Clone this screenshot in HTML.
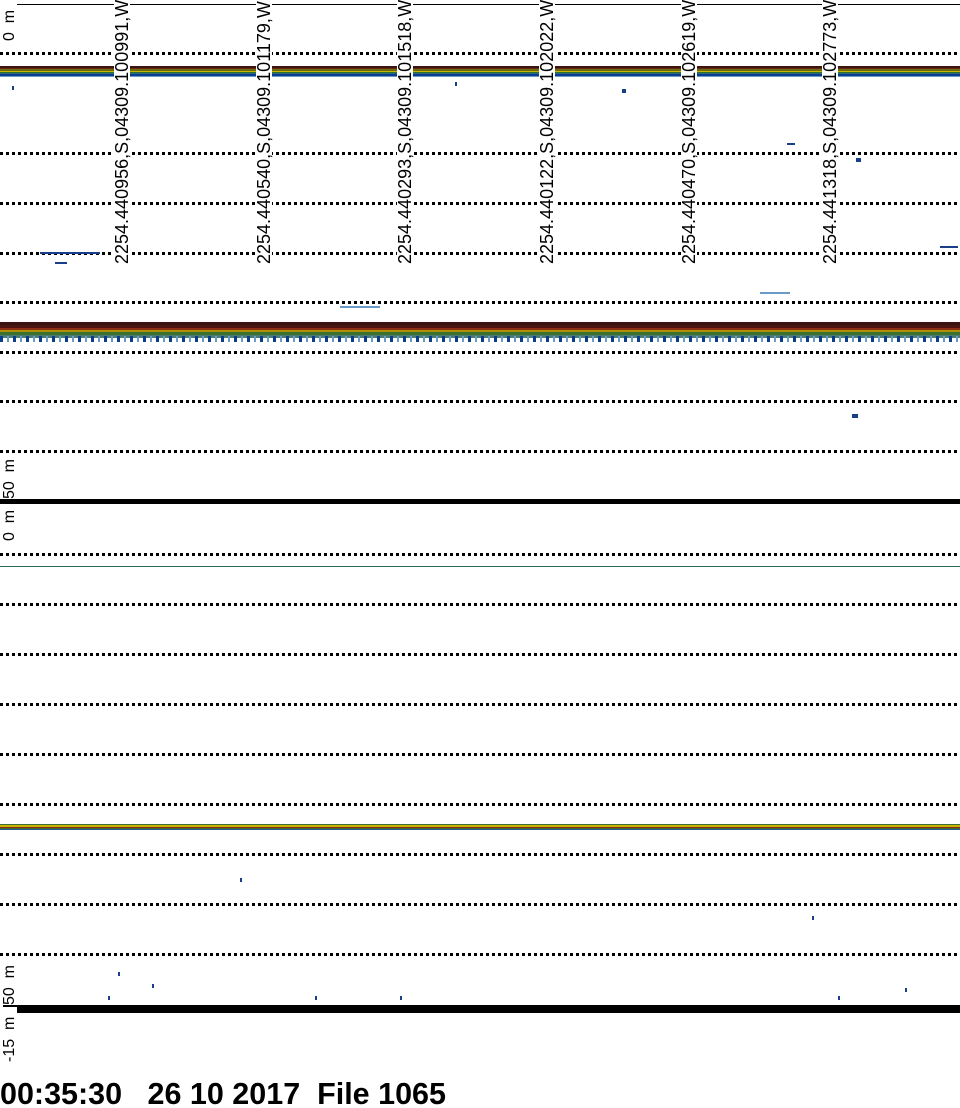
<!DOCTYPE html>
<html><head><meta charset="utf-8"><style>
html,body{margin:0;padding:0;background:#fff;width:960px;height:1108px;overflow:hidden;position:relative;font-family:"Liberation Sans",sans-serif}
.a{position:absolute}
.dot{position:absolute;left:0;width:960px;height:3px;background:repeating-linear-gradient(90deg,#000 0 3px,transparent 3px 6px)}
.vt{position:absolute;width:266px;height:16px;line-height:16px;font-size:18px;transform-origin:0 0;transform:rotate(-90deg);background:#fff;white-space:nowrap;color:#000}
.ax{position:absolute;font-size:16px;line-height:15px;transform-origin:0 0;transform:rotate(-90deg);white-space:nowrap}
.s{position:absolute;width:2px;height:4px;background:#1a3f8a}
</style></head><body>
<div class="a" style="left:17px;top:4px;width:943px;height:1px;background:#000"></div>
<div class="dot" style="top:52px"></div>
<div class="dot" style="top:152px"></div>
<div class="dot" style="top:202px"></div>
<div class="dot" style="top:252px"></div>
<div class="dot" style="top:301px"></div>
<div class="dot" style="top:351px"></div>
<div class="dot" style="top:400px"></div>
<div class="dot" style="top:450px"></div>
<div class="a" style="left:0;top:66px;width:960px;height:11px;background:linear-gradient(#3a1410 0 2px,#6b2a12 2px 3px,#6a6a10 3px 5px,#c8b400 5px 6px,#2f7030 6px 7px,#2a6a80 7px 8px,#0a3d8f 8px 10px,#6a9ac8 10px 11px)"></div>
<div class="a" style="left:0;top:322px;width:960px;height:16px;background:linear-gradient(#3a1410 0 3px,#4a1410 3px 6px,#8a3010 6px 8px,#b09000 8px 10px,#3a7030 10px 13px,#4a7a70 13px 16px)"></div>
<div class="a" style="left:0;top:336px;width:960px;height:6px;background:repeating-linear-gradient(90deg,#0a3d8f 0 3px,transparent 3px 7px,#6a9ac8 7px 9px,transparent 9px 13px)"></div>
<div class="a" style="left:0;top:499px;width:960px;height:5px;background:#000"></div>
<div class="dot" style="top:553px"></div>
<div class="a" style="left:0;top:566px;width:960px;height:1px;background:#2a6a50"></div>
<div class="dot" style="top:603px"></div>
<div class="dot" style="top:653px"></div>
<div class="dot" style="top:703px"></div>
<div class="dot" style="top:753px"></div>
<div class="dot" style="top:803px"></div>
<div class="a" style="left:0;top:824px;width:960px;height:6px;background:linear-gradient(#3a7030 0 1px,#c8b400 1px 3px,#8a3010 3px 4px,#3a7030 4px 5px,#2a5a9a 5px 6px)"></div>
<div class="dot" style="top:853px"></div>
<div class="dot" style="top:903px"></div>
<div class="dot" style="top:953px"></div>
<div class="a" style="left:17px;top:1005px;width:943px;height:8px;background:#000"></div>
<div class="a" style="left:3px;top:1005px;width:14px;height:2px;background:#000"></div>
<div class="a" style="left:3px;top:499px;width:14px;height:2px;background:#000"></div>
<div class="s" style="left:12px;top:86px"></div><div class="s" style="left:622px;top:89px;width:4px"></div>
<div class="s" style="left:455px;top:82px"></div><div class="s" style="left:856px;top:158px;width:5px"></div>
<div class="s" style="left:852px;top:414px;width:6px"></div><div class="s" style="left:940px;top:246px;width:18px;height:2px"></div>
<div class="s" style="left:40px;top:252px;width:60px;height:2px"></div><div class="s" style="left:55px;top:262px;width:12px;height:2px"></div>
<div class="s" style="left:787px;top:143px;width:8px;height:2px"></div><div class="s" style="left:760px;top:292px;width:30px;height:2px;background:#6a9ac8"></div>
<div class="s" style="left:340px;top:306px;width:40px;height:2px;background:#6a9ac8"></div>
<div class="s" style="left:108px;top:996px"></div><div class="s" style="left:315px;top:996px"></div><div class="s" style="left:400px;top:996px"></div>
<div class="s" style="left:838px;top:996px"></div><div class="s" style="left:905px;top:988px"></div><div class="s" style="left:152px;top:984px"></div>
<div class="s" style="left:118px;top:972px"></div><div class="s" style="left:812px;top:916px"></div><div class="s" style="left:240px;top:878px"></div>
<div class="vt" style="left:114px;top:264px">2254.440956,S,04309.100991,W</div>
<div class="vt" style="left:256px;top:264px">2254.440540,S,04309.101179,W</div>
<div class="vt" style="left:397px;top:264px">2254.440293,S,04309.101518,W</div>
<div class="vt" style="left:539px;top:264px">2254.440122,S,04309.102022,W</div>
<div class="vt" style="left:681px;top:264px">2254.440470,S,04309.102619,W</div>
<div class="vt" style="left:822px;top:264px">2254.441318,S,04309.102773,W</div>
<div class="ax" style="left:2px;top:41px">0&nbsp;&nbsp;m</div>
<div class="ax" style="left:2px;top:499px">50&nbsp;&nbsp;m</div>
<div class="ax" style="left:2px;top:541px">0&nbsp;&nbsp;m</div>
<div class="ax" style="left:2px;top:1005px">50&nbsp;&nbsp;m</div>
<div class="ax" style="left:2px;top:1062px">-15&nbsp;&nbsp;m</div>
<div class="a" style="left:0;top:1077px;font-size:30.5px;font-weight:bold;line-height:34px;white-space:pre">00:35:30   26 10 2017  File 1065</div>
</body></html>
